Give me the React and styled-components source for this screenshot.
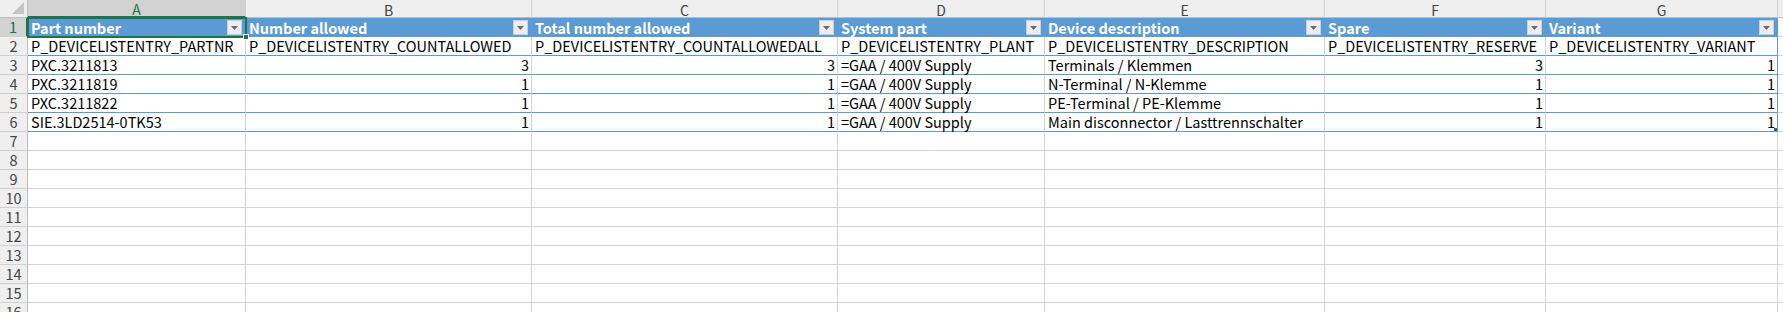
import React from "react";
import styled, { createGlobalStyle } from "styled-components";

const BLUE = "#5b9bd5";
const GRID = "#d4d4d4";
const GREEN = "#217346";
const FONT = `"Noto Sans CJK SC", "Microsoft YaHei", sans-serif`;

const COLS = ["A", "B", "C", "D", "E", "F", "G"];
const WIDTHS = [218, 286, 306, 207, 280, 221, 232];
const TOTAL_ROWS = 16;

const HEAD = [
  "Part number",
  "Number allowed",
  "Total number allowed",
  "System part",
  "Device description",
  "Spare",
  "Variant",
];

const ROWS = [
  [
    "P_DEVICELISTENTRY_PARTNR",
    "P_DEVICELISTENTRY_COUNTALLOWED",
    "P_DEVICELISTENTRY_COUNTALLOWEDALL",
    "P_DEVICELISTENTRY_PLANT",
    "P_DEVICELISTENTRY_DESCRIPTION",
    "P_DEVICELISTENTRY_RESERVE",
    "P_DEVICELISTENTRY_VARIANT",
  ],
  ["PXC.3211813", 3, 3, "=GAA / 400V Supply", "Terminals / Klemmen", 3, 1],
  ["PXC.3211819", 1, 1, "=GAA / 400V Supply", "N-Terminal / N-Klemme", 1, 1],
  ["PXC.3211822", 1, 1, "=GAA / 400V Supply", "PE-Terminal / PE-Klemme", 1, 1],
  ["SIE.3LD2514-0TK53", 1, 1, "=GAA / 400V Supply", "Main disconnector / Lasttrennschalter", 1, 1],
];

const GlobalStyle = createGlobalStyle`
  html, body {
    margin: 0;
    padding: 0;
    background: #fff;
    overflow: hidden;
  }
  * { box-sizing: border-box; }
`;

const Sheet = styled.div`
  display: grid;
  grid-template-columns: 28px ${WIDTHS.map((w) => `${w}px`).join(" ")} 1fr;
  grid-template-rows: 18px repeat(${TOTAL_ROWS}, 19px);
  width: 1783px;
  height: 312px;
  overflow: hidden;
  font-family: ${FONT};
  font-size: 14.5px;
  color: #000;
`;

const Corner = styled.div`
  position: relative;
  background: #efefef;
  border-right: 1px solid #bdbdbd;
  border-bottom: 1px solid #bdbdbd;
  display: flex;
  align-items: flex-end;
  justify-content: flex-end;
  padding: 0 3px 3px 0;
`;

const ColHeader = styled.div`
  display: flex;
  align-items: center;
  justify-content: center;
  background: ${(p) => (p.$selected ? "#d2d2d2" : "#efefef")};
  color: ${(p) => (p.$selected ? GREEN : "#444")};
  border-right: 1px solid #d0d0d0;
  border-bottom: ${(p) => (p.$selected ? `2px solid ${GREEN}` : "1px solid #bdbdbd")};
  font-size: 14px;
  line-height: 1;
  padding-top: 2px;
`;

const RowHeader = styled.div`
  display: flex;
  align-items: flex-end;
  justify-content: center;
  background: ${(p) => (p.$selected ? "#d2d2d2" : "#efefef")};
  color: ${(p) => (p.$selected ? GREEN : "#444")};
  border-right: ${(p) => (p.$selected ? `2px solid ${GREEN}` : "1px solid #bdbdbd")};
  border-bottom: 1px solid #d0d0d0;
  font-size: 14.5px;
  line-height: 17px;
  padding-bottom: 1px;
`;

const Cell = styled.div`
  position: relative;
  display: flex;
  align-items: flex-end;
  justify-content: ${(p) => (p.$num ? "flex-end" : "flex-start")};
  padding: 0 2px 1px 3px;
  background: #fff;
  border-right: 1px solid ${(p) => (p.$edge ? BLUE : GRID)};
  border-bottom: 1px solid ${(p) => (p.$table ? BLUE : GRID)};
  line-height: 17px;
  white-space: nowrap;
`;

const HeadCell = styled.div`
  position: relative;
  display: flex;
  align-items: center;
  justify-content: space-between;
  padding: 0 3px 0 3px;
  background: ${BLUE};
  color: #fff;
  font-size: 14.5px;
  font-weight: 700;
  line-height: 16px;
  white-space: nowrap;
  border-right: 1px solid ${BLUE};
  border-bottom: 1px solid ${BLUE};

  ${(p) =>
    p.$active &&
    `
    z-index: 2;
    &::after {
      content: "";
      position: absolute;
      top: -1px;
      left: -1px;
      right: -2px;
      bottom: -2px;
      border: 2px solid ${GREEN};
      pointer-events: none;
    }
  `}
`;

const HeadLabel = styled.span`
  padding-top: 2px;
`;

const FilterButton = styled.span`
  flex: none;
  width: 15px;
  height: 15px;
  margin-top: 1px;
  display: flex;
  align-items: center;
  justify-content: center;
  background: #ededed;
  border: 1px solid #d0d0d0;
`;

const FillHandle = styled.span`
  position: absolute;
  right: -4px;
  bottom: -4px;
  width: 6px;
  height: 6px;
  background: ${GREEN};
  border: 1px solid #fff;
  z-index: 3;
`;

const ResizeHandle = styled.span`
  position: absolute;
  right: 0;
  bottom: 0;
  width: 3px;
  height: 3px;
  background: #2f5f9e;
`;

const Arrow = () => (
  <svg width="7" height="4" viewBox="0 0 7 4">
    <path d="M0 0H7L3.5 4Z" fill="#6b6b6b" />
  </svg>
);

const CornerMark = () => (
  <svg width="12" height="12" viewBox="0 0 12 12">
    <path d="M12 0V12H0Z" fill="#c4c4c4" />
  </svg>
);

export default function App() {
  const rows = [];
  for (let r = 1; r <= TOTAL_ROWS; r++) {
    rows.push(
      <RowHeader key={`rh${r}`} $selected={r === 1}>
        {r}
      </RowHeader>
    );
    if (r === 1) {
      HEAD.forEach((h, c) => {
        rows.push(
          <HeadCell key={`h${c}`} $active={c === 0}>
            <HeadLabel>{h}</HeadLabel>
            <FilterButton>
              <Arrow />
            </FilterButton>
            {c === 0 && <FillHandle />}
          </HeadCell>
        );
      });
    } else {
      const data = ROWS[r - 2];
      COLS.forEach((_, c) => {
        const v = data ? data[c] : "";
        rows.push(
          <Cell
            key={`c${r}-${c}`}
            $num={typeof v === "number"}
            $table={!!data}
            $edge={!!data && c === COLS.length - 1}
          >
            {v}
            {r === 6 && c === COLS.length - 1 && <ResizeHandle />}
          </Cell>
        );
      });
    }
    rows.push(<Cell key={`x${r}`} />);
  }

  return (
    <>
      <GlobalStyle />
      <Sheet>
        <Corner>
          <CornerMark />
        </Corner>
        {COLS.map((l, i) => (
          <ColHeader key={l} $selected={i === 0}>
            {l}
          </ColHeader>
        ))}
        <ColHeader />
        {rows}
      </Sheet>
    </>
  );
}
